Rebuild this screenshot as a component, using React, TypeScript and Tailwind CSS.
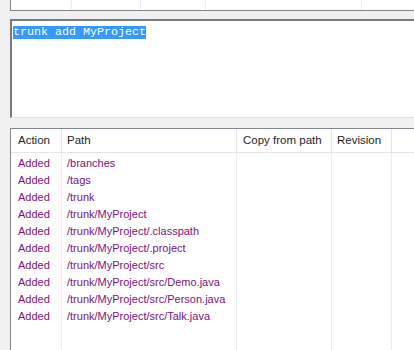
const rows = [
  "/branches",
  "/tags",
  "/trunk",
  "/trunk/MyProject",
  "/trunk/MyProject/.classpath",
  "/trunk/MyProject/.project",
  "/trunk/MyProject/src",
  "/trunk/MyProject/src/Demo.java",
  "/trunk/MyProject/src/Person.java",
  "/trunk/MyProject/src/Talk.java",
];

const cols = [
  { title: "Action", w: "w-[51px]", pl: "pl-[7px]" },
  { title: "Path", w: "w-[175px]", pl: "pl-[5px]" },
  { title: "Copy from path", w: "w-[95px]", pl: "pl-[6px]" },
  { title: "Revision", w: "w-[60px]", pl: "pl-[5px]" },
];

export default function App() {
  return (
    <div className="w-[414px] h-[350px] bg-[#f0f0f0] overflow-hidden pl-[10px] font-['Liberation_Sans',sans-serif] text-[11px]">
      {/* top list remainder */}
      <div className="h-[11px] flex bg-white border-l border-b border-[#828790]">
        <div className="w-[61px] border-r border-[#e8eef6]" />
        <div className="w-[69px] border-r border-[#e8eef6]" />
        <div className="w-[65px] border-r border-[#e8eef6]" />
        <div className="w-[156px] border-r border-[#e8eef6]" />
        <div className="flex-1" />
      </div>

      {/* message box */}
      <div className="mt-[8px] h-[99px] bg-white border-t-2 border-l-2 border-t-[#7a7a7a] border-l-[#7a7a7a] border-b border-b-[#e3e3e3] pt-[2px] pl-[1px]">
        <span className="bg-[#3399ff] text-white font-['Liberation_Mono',monospace] text-[11.67px] leading-[13px] inline-block">
          trunk add MyProject
        </span>
      </div>

      {/* changed paths list */}
      <div className="mt-[10px] h-[223px] bg-white border-t border-l border-[#828790] flex">
        {cols.map((c, i) => (
          <div key={c.title} className={`${c.w} border-r border-[#e8eef6] flex flex-col`}>
            <div className={`h-[24px] flex items-center ${c.pl} border-b border-[#e5e5e5] border-r border-r-[#e5e5e5] -mr-px text-[#1e1e1e] text-[11.5px]`}>
              {c.title}
            </div>
            <div className="pt-[2px]">
              {i < 2 &&
                rows.map((r) => (
                  <div key={r} className={`h-[17px] flex items-center ${i === 0 ? "pl-[7px]" : "pl-[5px]"} text-[#7a127a] whitespace-nowrap`}>
                    {i === 0 ? "Added" : r}
                  </div>
                ))}
            </div>
          </div>
        ))}
        <div className="flex-1 flex flex-col">
          <div className="h-[24px] border-b border-[#e5e5e5]" />
        </div>
      </div>
    </div>
  );
}
